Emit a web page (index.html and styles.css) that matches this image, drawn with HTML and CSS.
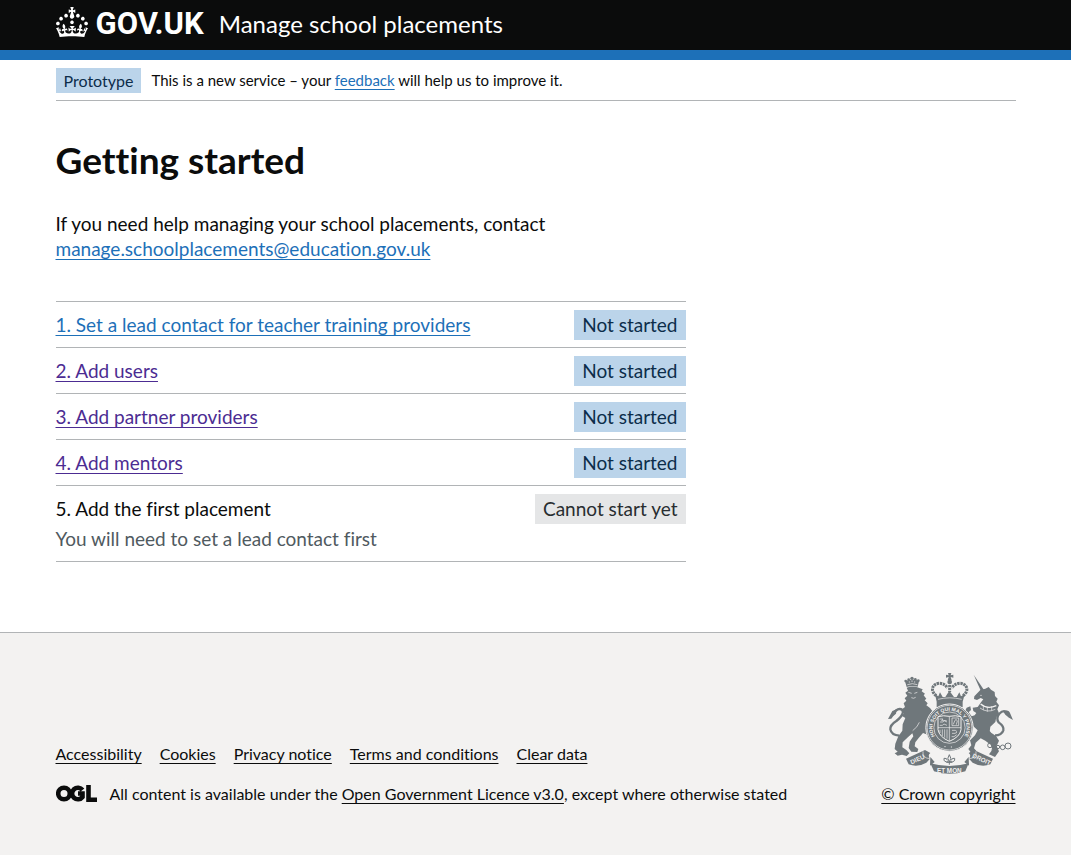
FILE: index.html
```html
<!DOCTYPE html>
<html lang="en">
<head>
  <meta charset="utf-8">
  <meta name="viewport" content="width=device-width, initial-scale=1">
  <title>Getting started - Manage school placements</title>
  <link rel="stylesheet" href="styles.css">
</head>
<body>
  <header class="header">
    <div class="container header__inner">
      <a class="header__home" href="#" aria-label="GOV.UK">
        <svg class="header__crown" viewBox="0 0 32 30" width="32" height="30" aria-hidden="true" focusable="false">
          <path d="M22.6 10.4c-1 .4-2-.1-2.4-1-.4-.9.1-2 1-2.4.9-.4 2 .1 2.4 1s-.1 2-1 2.4m-5.9 6.7c-.9.4-2-.1-2.4-1-.4-.9.1-2 1-2.4.9-.4 2 .1 2.4 1s-.1 2-1 2.4m10.8-3.7c-1 .4-2-.1-2.4-1-.4-.9.1-2 1-2.4.9-.4 2 .1 2.4 1s0 2-1 2.4m3.3 4.8c-1 .4-2-.1-2.4-1-.4-.9.1-2 1-2.4.9-.4 2 .1 2.4 1s-.1 2-1 2.4M17 4.7l2.3 1.2V2.5l-2.3.7-.2-.2.9-3h-3.4l.9 3-.2.2c-.1.1-2.3-.7-2.3-.7v3.4L15 4.7c.1.1.1.2.2.2l-1.3 4c-.1.2-.1.4-.1.6 0 1.1.8 2 1.9 2.2h.7c1-.2 1.9-1.1 1.9-2.1 0-.2 0-.4-.1-.6l-1.3-4c-.1-.2 0-.2.1-.3m-7.6 5.7c.9.4 2-.1 2.4-1 .4-.9-.1-2-1-2.4-.9-.4-2 .1-2.4 1s0 2 1 2.4m-5 3c.9.4 2-.1 2.4-1 .4-.9-.1-2-1-2.4-.9-.4-2 .1-2.4 1s.1 2 1 2.4m-3.2 4.8c.9.4 2-.1 2.4-1 .4-.9-.1-2-1-2.4-.9-.4-2 .1-2.4 1s0 2 1 2.4m14.8 11c4.4 0 8.6.3 12.3.8 1.1-4.5 2.4-7 3.7-8.8l-2.5-.9c.2 1.3.3 1.9 0 2.7-.4-.4-.8-1.1-1.1-2.3l-1.2 4c.7-.5 1.3-.8 2-.9-1.1 2.5-2.6 3.1-3.5 3-1.1-.2-1.7-1.2-1.5-2.1.3-1.2 1.5-1.5 2.1-.1 1.1-2.3-.8-3-2-2.3 1.9-1.9 2.1-3.5.6-5.6-2.1 1.6-2.1 3.2-1.2 5.5-1.2-1.4-3.2-.6-2.5 1.6.9-1.4 2.1-.5 1.9.8-.2 1.1-1.7 2.1-3.5 1.9-2.7-.2-2.9-2.1-2.9-3.6.7-.1 1.9.5 2.9 1.9l.4-4.3c-1.1 1.1-2.1 1.4-3.2 1.4.4-1.2 2.1-3 2.1-3h-5.4s1.7 1.9 2.1 3c-1.1 0-2.1-.2-3.2-1.4l.4 4.3c1-1.4 2.2-2 2.9-1.9-.1 1.5-.2 3.4-2.9 3.6-1.9.2-3.4-.8-3.5-1.9-.2-1.3 1-2.2 1.9-.8.7-2.3-1.2-3-2.5-1.6.9-2.2.9-3.9-1.2-5.5-1.5 2-1.3 3.7.6 5.6-1.2-.7-3.1 0-2 2.3.6-1.4 1.8-1.1 2.1.1.2.9-.3 1.9-1.5 2.1-.9.2-2.4-.5-3.5-3 .6 0 1.2.3 2 .9l-1.2-4c-.3 1.1-.7 1.9-1.1 2.3-.3-.8-.2-1.4 0-2.7l-2.9.9C1.3 23 2.6 25.5 3.7 30c3.7-.5 7.9-.8 12.3-.8"/>
        </svg>
        <span class="header__brand">GOV.UK</span>
      </a>
      <a class="header__service" href="#">Manage school placements</a>
    </div>
  </header>

  <div class="container">
    <div class="phase-banner">
      <strong class="tag tag--small">Prototype</strong>
      <span>This is a new service – your <a class="link" href="#">feedback</a> will help us to improve it.</span>
    </div>
  </div>

  <main class="container main">
    <div class="column">
      <h1 class="heading">Getting started</h1>
      <p class="intro">If you need help managing your school placements, contact<br>
        <a class="link" href="#">manage.schoolplacements@education.gov.uk</a></p>
      <ul class="tasks">
        <li class="task">
          <a class="link" href="#">1. Set a lead contact for teacher training providers</a>
          <strong class="tag">Not started</strong>
        </li>
        <li class="task">
          <a class="link link--visited" href="#">2. Add users</a>
          <strong class="tag">Not started</strong>
        </li>
        <li class="task">
          <a class="link link--visited" href="#">3. Add partner providers</a>
          <strong class="tag">Not started</strong>
        </li>
        <li class="task">
          <a class="link link--visited" href="#">4. Add mentors</a>
          <strong class="tag">Not started</strong>
        </li>
        <li class="task">
          <div>
            <div>5. Add the first placement</div>
            <div class="task__hint">You will need to set a lead contact first</div>
          </div>
          <strong class="tag tag--grey">Cannot start yet</strong>
        </li>
      </ul>
    </div>
  </main>

  <footer class="footer">
    <div class="container footer__inner">
      <div class="footer__main">
        <ul class="footer__links">
          <li><a class="footer__link" href="#">Accessibility</a></li>
          <li><a class="footer__link" href="#">Cookies</a></li>
          <li><a class="footer__link" href="#">Privacy notice</a></li>
          <li><a class="footer__link" href="#">Terms and conditions</a></li>
          <li><a class="footer__link" href="#">Clear data</a></li>
        </ul>
        <div class="footer__licence">
          <svg class="footer__ogl" viewBox="0 0 41 17" width="41" height="17" aria-hidden="true" focusable="false">
            <circle cx="8" cy="8.500" r="5.800"/>
            <path d="M26.500 5A5.800 5.800 0 1 0 26.500 12V8.500H22"/>
            <path d="M32.500 0V14.700H41"/>
          </svg>
          <span>All content is available under the <a class="footer__link" href="#">Open Government Licence v3.0</a>, except where otherwise stated</span>
        </div>
      </div>
      <a class="footer__copyright" href="#">
        <svg class="arms" viewBox="24 24 375 303" width="125" height="101" aria-hidden="true" focusable="false">
          <defs>
            <path id="garter" d="M172 224A51 51 0 1 1 245 224"/>
          </defs>
          <!-- lion -->
          <path d="M80 66L75 49Q96 39 117 48L113 65Q97 60 80 66Z"/>
          <g><circle cx="77" cy="48" r="4"/><circle cx="86" cy="44" r="4"/><circle cx="96" cy="40" r="5"/><circle cx="106" cy="43" r="4"/><circle cx="115" cy="47" r="4"/></g>
          <path class="cut thin" d="M82 59Q97 53 112 59M88 49v4M96 46v5M104 49v4"/>
          <path d="M80 68Q98 61 116 68L128 73L125 79L135 86L131 91L139 101L134 106L143 115L139 121L150 129L157 138L150 149L141 165L138 180L144 196L155 203L157 214L148 218L139 208L129 204L116 219L106 232L104 244L115 252L112 261L94 260L86 249L89 230L100 214L97 205L82 218L68 232L67 247L79 255L88 265L80 273L66 269L53 272L44 265L53 260L44 252L46 236L55 214L67 197L68 178L76 159L65 152L72 145L67 132L75 126L71 115L79 107L74 100L82 92L76 83L84 77Z"/>
          <path class="cut thin" d="M85 82l10 3M103 85l9-3M94 98q7 4 13-1M118 172q-5 14-20 25"/>
          <path class="line" d="M58 212Q34 210 31 193Q30 180 49 168Q67 154 69 141Q68 132 59 132Q48 132 36 151"/>
          <path d="M24 162L37 138L50 133L48 146L40 153L34 161Z"/>
          <!-- unicorn -->
          <path d="M281 29L312 75L304 81Z"/>
          <path d="M283 94L301 75L316 71L326 66L333 74L344 81L345 93L353 101L349 110L357 121L352 133L357 145L349 157L346 171L331 185L329 200L348 213L357 227L350 243L357 259L345 276L327 268L337 254L332 239L316 227L302 220L287 233L282 250L291 260L276 267L265 252L274 241L270 226L285 211L293 196L280 184L276 174L258 164L251 146L260 128L271 124L273 135L266 142L275 154L284 151L289 144L280 138L278 128L293 126L303 112L310 103L302 99L291 105L282 102Z"/>
          <circle class="cut thin" cx="303" cy="91" r="1"/>
          <path class="cut" d="M302 117Q321 134 349 122"/>
          <path class="cut thin" d="M300 129Q321 145 346 133M310 121v14M322 126v14M335 124v13"/>
          <path class="line" d="M345 211Q365 211 370 196Q373 184 356 172Q347 159 358 146Q370 133 382 142L390 156"/>
          <path d="M370 140Q385 130 391 146L399 165L387 158L376 149Z"/>
          <g class="chain"><circle cx="325" cy="204" r="6"/><circle cx="337" cy="218" r="6"/><circle cx="330" cy="241" r="7"/><circle cx="343" cy="255" r="7"/><circle cx="354" cy="246" r="5"/><circle cx="368" cy="247" r="7"/><circle cx="384" cy="243" r="9"/></g>
          <!-- royal crown -->
          <path d="M204 24h10l-2 7 8-2v9l-8-2 3 10h-12l3-10-8 2v-9l8 2Z"/>
          <circle cx="209" cy="51" r="7"/>
          <path class="beads" d="M169 92C148 77 158 55 178 55Q196 56 202 69M249 92C270 77 260 55 240 55Q222 56 216 69M209 60v21"/>
          <path d="M170 110L165 88L175 94L180 82L188 96L196 96L208 77L222 96L230 96L238 82L243 94L254 88L248 110L248 126H170Z"/>
          <path class="cut thin" d="M174 103Q209 94 245 103"/>
          <!-- garter and shield -->
          <circle class="garter-edge" cx="208.500" cy="188" r="71"/>
          <circle class="ring" cx="208.500" cy="188" r="67"/>
          <circle class="ring" cx="208.500" cy="188" r="47"/>
          <text class="motto garter-text"><textPath href="#garter" startOffset="50%" text-anchor="middle">HONI SOIT QUI MAL Y PENSE</textPath></text>
          <path class="shield" d="M174 155Q190 150 208 154Q226 150 243 155V194Q240 216 208 229Q178 216 174 194Z"/>
          <path class="cut thin" d="M208 154V228M174 188H243"/>
          <path class="cut thin" d="M179 162h10l-4 5h15M180 171h8l5-4 8 4M179 181h8l5-4 9 4M216 159h20v23h-20ZM220 178l4-10 4-5 4 5-3 11M180 194v10M187 193v20M194 193v25M201 193v28M216 196h10l5 4M216 205h9l6-3M215 215h7l8-6"/>
          <circle class="cut thin" cx="195" cy="245" r="1"/><circle class="cut thin" cx="214" cy="246" r="1"/>
          <!-- motto ribbon -->
          <path class="ribbon" d="M78 281L135 255L151 264Q142 271 150 281L139 293Q113 308 86 298ZM339 281L282 255L266 264Q275 271 267 281L278 293Q304 308 331 298Z"/>
          <path class="cut thin" d="M129 259Q126 280 151 281M288 259Q291 280 266 281"/>
          <path class="ribbon" d="M151 295Q208 311 266 295L256 319Q208 334 162 319Z"/>
          <path d="M151 276L164 291L150 302ZM266 276L253 291L267 302Z"/>
          <text class="motto" transform="translate(115 289) rotate(-24)" text-anchor="middle">DIEU</text>
          <text class="motto" x="208" y="323" text-anchor="middle">ET MON</text>
          <text class="motto" transform="translate(302 289) rotate(25)" text-anchor="middle">DROIT</text>
          <path class="badge" d="M208 269q-9 11 0 22q9-11 0-22M206 290q-16 3-14-10q9-2 10 6M210 290q16 3 14-10q-9-2-10 6M199 292h18M208 291v8"/>
        </svg>
        <span>© Crown copyright</span>
      </a>
    </div>
  </footer>
</body>
</html>
```
FILE: styles.css
```css
* {
  box-sizing: border-box;
}

body {
  margin: 0;
  display: flex;
  flex-direction: column;
  min-height: 100vh;
  background: #fff;
  color: #0b0c0c;
  font-family: Lato, "Liberation Sans", sans-serif;
  font-size: 19px;
  line-height: 25px;
  font-variant-ligatures: none;
}

.container {
  width: calc(100% - 60px);
  max-width: 960px;
  margin: 0 auto;
}

.header {
  background: #0b0c0c;
  border-bottom: 10px solid #1d70b8;
}

.header__inner {
  display: flex;
  align-items: center;
  gap: 15px;
  padding-bottom: 2px;
}

.header__home {
  display: flex;
  align-items: center;
  gap: 8px;
  color: #fff;
  text-decoration: none;
}

.header__crown {
  fill: #fff;
  margin-bottom: 4px;
}

.header__brand {
  font-family: Roboto, sans-serif;
  font-size: 31px;
  font-weight: 700;
  line-height: 48px;
}

.header__service {
  color: #fff;
  font-size: 24px;
  line-height: 48px;
  text-decoration: none;
}

.phase-banner {
  display: flex;
  align-items: center;
  gap: 10px;
  padding: 8px 0 7px;
  border-bottom: 1px solid #b1b4b6;
  font-size: 15px;
}

.link,
.footer__link,
.footer__copyright {
  text-decoration: underline;
  text-decoration-thickness: 1px;
  text-decoration-skip-ink: none;
  text-underline-offset: 3px;
}

.link {
  color: #1d70b8;
}

.link--visited {
  color: #4c2c92;
}

.tag {
  flex: none;
  padding: 0 8px;
  background: #bbd4ea;
  color: #0c2d4a;
  font-weight: 400;
}

.tag--small {
  font-size: 16px;
}

.tag--grey {
  background: #e5e6e7;
  color: #282d30;
}

.main {
  flex: 1;
  padding: 40px 0 70px;
}

.column {
  width: 66%;
  max-width: 630px;
}

.heading {
  margin: 0 0 32px;
  font-size: 37px;
  font-weight: 700;
  line-height: 38px;
}

.intro {
  margin: 0 0 40px;
}

.tasks {
  margin: 0;
  padding: 0;
  list-style: none;
  border-top: 1px solid #b1b4b6;
}

.task {
  display: flex;
  align-items: flex-start;
  justify-content: space-between;
  padding: 8px 0 7px;
  border-bottom: 1px solid #b1b4b6;
  line-height: 30px;
}

.task__hint {
  color: #505a5f;
}

.footer {
  padding: 40px 0 49px;
  border-top: 1px solid #b1b4b6;
  background: #f3f2f1;
  font-size: 16px;
}

.footer__inner {
  display: flex;
  align-items: flex-end;
  justify-content: space-between;
  gap: 30px;
}

.footer__links {
  display: flex;
  flex-wrap: wrap;
  gap: 5px 18px;
  margin: 0 0 15px;
  padding: 0;
  list-style: none;
}

.footer__link {
  color: #0b0c0c;
}

.footer__licence {
  display: flex;
  align-items: center;
  gap: 13px;
}

.footer__ogl {
  flex: none;
  fill: none;
  stroke: #0b0c0c;
  stroke-width: 4.600px;
}

.footer__copyright {
  display: flex;
  flex-direction: column;
  align-items: flex-end;
  gap: 7px;
  color: #0b0c0c;
  white-space: nowrap;
}

.arms {
  margin-right: 3px;
  fill: #6f777b;
  stroke: none;
}

.arms .cut {
  fill: none;
  stroke: #f3f2f1;
  stroke-width: 4px;
}

.arms .thin {
  stroke-width: 2px;
}

.arms .line {
  fill: none;
  stroke: #6f777b;
  stroke-width: 7px;
}

.arms .chain,
.arms .badge {
  fill: none;
  stroke: #6f777b;
  stroke-width: 3px;
}

.arms .beads {
  fill: none;
  stroke: #6f777b;
  stroke-width: 9px;
  stroke-dasharray: 7px 2px;
}

.arms .garter-edge {
  stroke: #f3f2f1;
  stroke-width: 3px;
}

.arms .ring {
  fill: none;
  stroke: #f3f2f1;
  stroke-width: 2px;
}

.arms .shield {
  stroke: #f3f2f1;
  stroke-width: 3px;
}

.arms .motto {
  fill: #f3f2f1;
  font-family: "Liberation Sans", sans-serif;
  font-size: 19px;
  font-weight: 700;
}

.arms .garter-text {
  font-size: 15px;
}
```
